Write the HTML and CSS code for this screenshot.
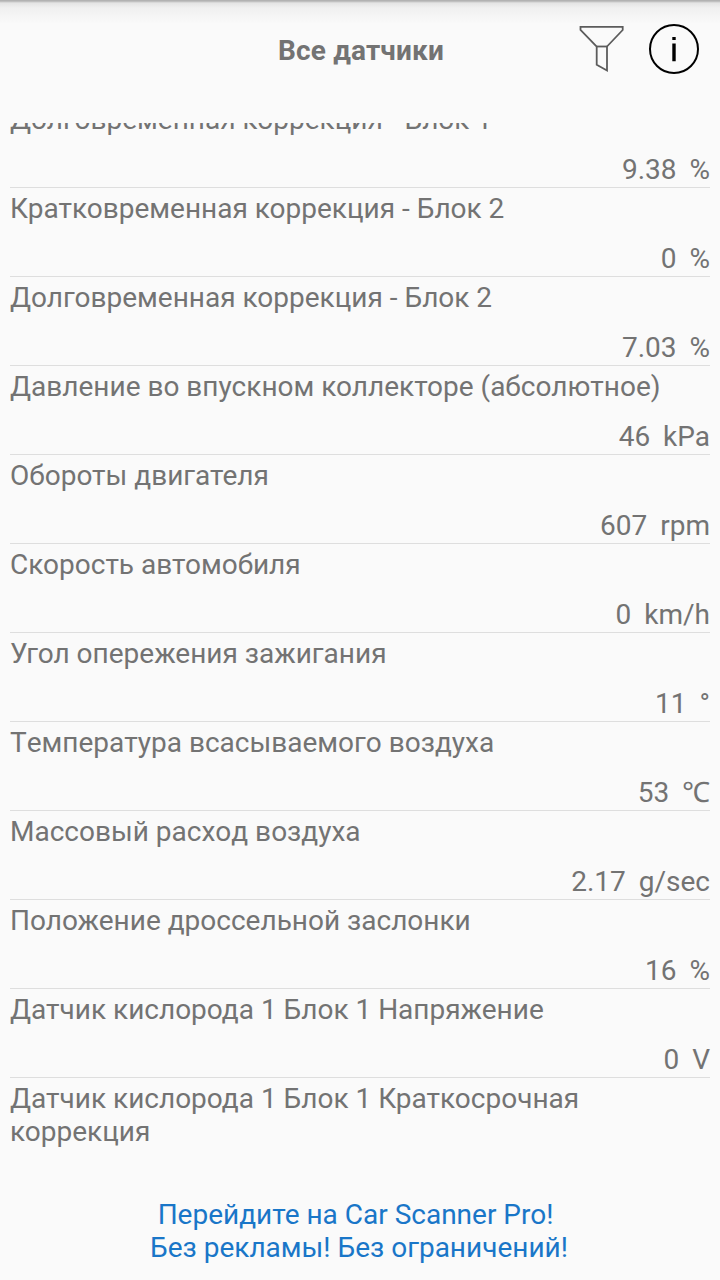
FILE: index.html
```html
<!DOCTYPE html>
<html lang="ru">

<head>
    <meta charset="UTF-8">
    <meta name="viewport" content="width=device-width, initial-scale=1.0">
    <title>Все датчики</title>
    <link rel="stylesheet" href="styles.css">
</head>

<body>
    <div class="wrap">
        <header class="header">
            <h1>Все датчики</h1>
            <div class="icons">
                <!-- filter -->
                <svg width="46" height="50" viewBox="0 0 46 50" fill="none" stroke="#5c5c5c" stroke-width="1.8">
                    <path d="M1.500 2.800H43.700V6L28 22.500V46.500L17.700 40.700V22.500L1.500 6Z" />
                    <path d="M17.700 22.500H28" />
                </svg>
                <!-- info -->
                <svg width="52" height="52" viewBox="0 0 52 52">
                    <circle cx="26" cy="26" r="24" fill="none" stroke="#000" stroke-width="2" />
                    <path d="M24.300 14H27.700V17H24.300ZM24.300 20.500H27.700V38.200H24.300Z" />
                </svg>
            </div>
        </header>

        <ul class="list">
            <li>
                <p class="name">Долговременная коррекция - Блок 1</p>
                <p class="value">9.38 <span>%</span></p>
            </li>
            <li>
                <p class="name">Кратковременная коррекция - Блок 2</p>
                <p class="value">0 <span>%</span></p>
            </li>
            <li>
                <p class="name">Долговременная коррекция - Блок 2</p>
                <p class="value">7.03 <span>%</span></p>
            </li>
            <li>
                <p class="name">Давление во впускном коллекторе (абсолютное)</p>
                <p class="value">46 <span>kPa</span></p>
            </li>
            <li>
                <p class="name">Обороты двигателя</p>
                <p class="value">607 <span>rpm</span></p>
            </li>
            <li>
                <p class="name">Скорость автомобиля</p>
                <p class="value">0 <span>km/h</span></p>
            </li>
            <li>
                <p class="name">Угол опережения зажигания</p>
                <p class="value">11 <span>°</span></p>
            </li>
            <li>
                <p class="name wide">Температура всасываемого воздуха</p>
                <p class="value">53 <span>℃</span></p>
            </li>
            <li>
                <p class="name wide">Массовый расход воздуха</p>
                <p class="value">2.17 <span>g/sec</span></p>
            </li>
            <li>
                <p class="name">Положение дроссельной заслонки</p>
                <p class="value">16 <span>%</span></p>
            </li>
            <li>
                <p class="name">Датчик кислорода 1 Блок 1 Напряжение</p>
                <p class="value">0 <span>V</span></p>
            </li>
            <li>
                <p class="name">Датчик кислорода 1 Блок 1 Краткосрочная коррекция</p>
            </li>
        </ul>

        <a class="promo">Перейдите на Car Scanner Pro!&nbsp;<br>Без рекламы! Без ограничений!</a>
    </div>
</body>

</html>
```

FILE: styles.css
```css
* {
    box-sizing: border-box;
    margin: 0;
    padding: 0;
}

body {
    background: #fafafa;
    color: #737373;
    font-family: Roboto, "Noto Sans", sans-serif;
    font-size: 28px;
    line-height: 33px;
}

.wrap {
    display: flex;
    flex-direction: column;
    height: 1280px;
    overflow: hidden;
    background: linear-gradient(#b0b0b0 0, #b4b4b4 1px, #e4e4e4 3px, #f0f0f0 8px, #fafafa 24px);
}

.header {
    display: grid;
    grid-template-columns: 1fr auto 1fr;
    align-items: center;
    height: 98px;
    margin-bottom: 25px;
    padding: 0 20px 0 22px;
}

.header h1 {
    grid-column: 2;
    padding-top: 2px;
    font-size: 28px;
    font-weight: bold;
    letter-spacing: 0.15px;
}

.icons {
    display: flex;
    justify-content: flex-end;
    align-items: center;
    gap: 23px;
}

/* list is scrolled, the first row is cut by the header */
.list {
    height: 1049px;
    overflow: hidden;
    padding: 0 10px;
    list-style: none;
}

.list li {
    display: flex;
    flex-direction: column;
    justify-content: space-between;
    min-height: 89px;
    padding: 4px 0 1px;
    border-bottom: 1px solid #dedede;
}

.list li:first-child {
    margin-top: -24px;
}

.list li:last-child {
    border-bottom: none;
}

.wide {
    font-kerning: none;
}

.value {
    text-align: right;
}

.value span {
    margin-left: 6px;
}

.promo {
    padding: 26px 2px 0 0;
    color: #1976c8;
    text-align: center;
}
```
